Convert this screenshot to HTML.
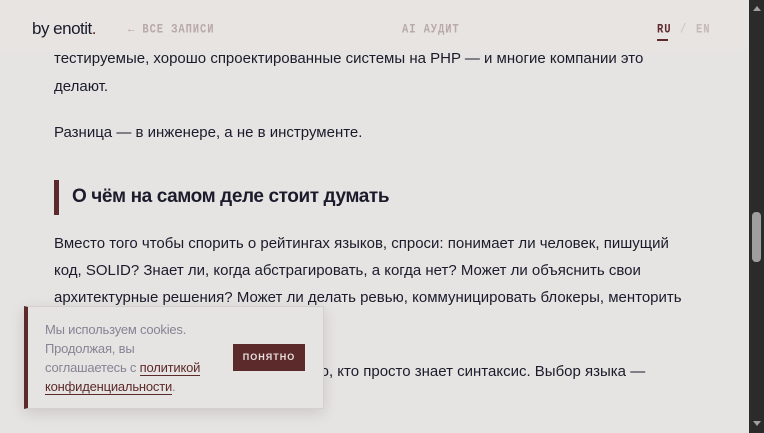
<!DOCTYPE html>
<html><head><meta charset="utf-8"><style>
html,body{margin:0;padding:0}
body{width:764px;height:433px;overflow:hidden;background:#e6e4e2;position:relative;font-family:"Liberation Sans",sans-serif;color:#1b1b2b}
.l{position:absolute;left:54px;white-space:nowrap;font-size:15px;letter-spacing:0px}
.hdr{position:absolute;left:0;top:0;width:749px;height:50px;background:rgba(230,228,226,0.93)}
.sb{position:absolute;right:0;top:0;width:15px;height:433px;background:#2b2b2b}
.mono{font-family:"Liberation Mono",monospace;font-size:10.5px;letter-spacing:0.9px;font-weight:bold;transform:scaleY(1.2);transform-origin:0 50%}
</style></head><body>
<div class="l" style="top:50px">тестируемые, хорошо спроектированные системы на PHP — и многие компании это</div>
<div class="l" style="top:78px">делают.</div>
<div class="l" style="top:124px">Разница — в инженере, а не в инструменте.</div>
<div style="position:absolute;left:54px;top:180px;width:5px;height:35px;background:#5c2a2a"></div>
<div class="l" style="left:72px;top:186px;font-size:19px;font-weight:bold;letter-spacing:-0.4px">О чём на самом деле стоит думать</div>
<div class="l" style="top:235px">Вместо того чтобы спорить о рейтингах языков, спроси: понимает ли человек, пишущий</div>
<div class="l" style="top:262px">код, SOLID? Знает ли, когда абстрагировать, а когда нет? Может ли объяснить свои</div>
<div class="l" style="top:289px">архитектурные решения? Может ли делать ревью, коммуницировать блокеры, менторить</div>
<div class="l" style="top:316px">джунов?</div>
<div class="l" style="top:363px">Хороший инженер на языке лучше того, кто просто знает синтаксис. Выбор языка —</div>
<div class="hdr"></div>
<div style="position:absolute;left:32px;top:19px;font-size:17px;letter-spacing:-0.5px;color:#1b1b2b">by enotit<span style="color:#5c2a2a">.</span></div>
<div class="mono" style="position:absolute;left:128px;top:24px;color:#b9a9a9">← ВСЕ ЗАПИСИ</div>
<div class="mono" style="position:absolute;left:402px;top:24px;color:#b9a9a9">AI АУДИТ</div>
<div class="mono" style="position:absolute;left:657px;top:24px;color:#5c2a2a">RU</div>
<div style="position:absolute;left:657px;top:39px;width:11px;height:2px;background:#5c2a2a"></div>
<div class="mono" style="position:absolute;left:680px;top:24px;color:#d3c8c8">/</div>
<div class="mono" style="position:absolute;left:696px;top:24px;color:#c4b8b8">EN</div>
<div style="position:absolute;left:24px;top:306px;width:295px;height:101px;background:#e6e4e2;border-left:4px solid #5c2a2a;border-top:1px solid #d3d0ce;border-right:1px solid #d3d0ce;border-bottom:1px solid #d3d0ce;box-shadow:0 4px 14px rgba(0,0,0,0.12)"></div>
<div style="position:absolute;left:45px;top:320px;font-size:13px;line-height:19px;color:#868494;letter-spacing:-0.2px;width:190px">Мы используем cookies.<br>Продолжая, вы<br>соглашаетесь с <span style="color:#5c2a2a;border-bottom:1px solid #5c2a2a">политикой</span><br><span style="color:#5c2a2a;border-bottom:1px solid #5c2a2a">конфиденциальности</span>.</div>
<div style="position:absolute;left:233px;top:344px;width:72px;height:27px;background:#5c2a2a;color:#e8dede;font-size:9px;font-weight:bold;letter-spacing:1px;text-align:center;line-height:27px">ПОНЯТНО</div>
<div class="sb">
<div style="position:absolute;left:4px;top:6px;width:0;height:0;border-left:4px solid transparent;border-right:4px solid transparent;border-bottom:5px solid #a0a0a0"></div>
<div style="position:absolute;left:3px;top:212px;width:9px;height:50px;border-radius:4px;background:#9f9f9f"></div>
<div style="position:absolute;left:4px;top:421px;width:0;height:0;border-left:4px solid transparent;border-right:4px solid transparent;border-top:5px solid #a0a0a0"></div>
</div>
</body></html>
